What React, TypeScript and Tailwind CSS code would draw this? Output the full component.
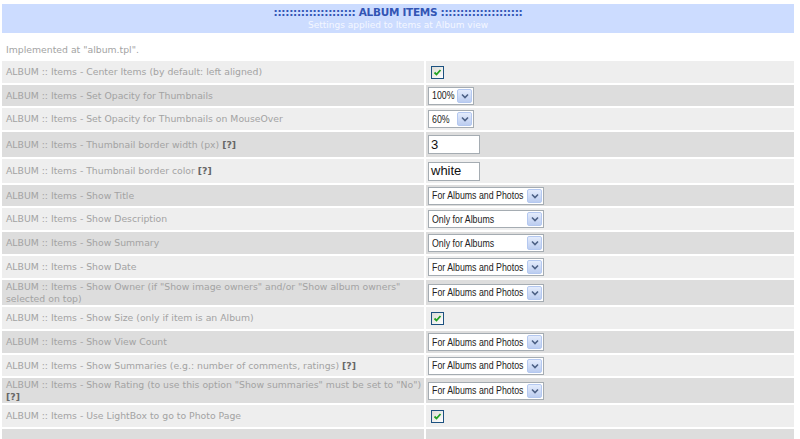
import React from "react";

type Ctrl =
  | { kind: "check" }
  | { kind: "select"; value: string; w: number }
  | { kind: "text"; value: string };

type Row = { label: React.ReactNode; ctrl: Ctrl; h: number };

const Q = () => <b className="text-[#666666]">[?]</b>;

const BIG = 116;

const rows: Row[] = [
  { label: "ALBUM :: Items - Center Items (by default: left aligned)", ctrl: { kind: "check" }, h: 22 },
  { label: "ALBUM :: Items - Set Opacity for Thumbnails", ctrl: { kind: "select", value: "100%", w: 46 }, h: 21 },
  { label: "ALBUM :: Items - Set Opacity for Thumbnails on MouseOver", ctrl: { kind: "select", value: "60%", w: 46 }, h: 22 },
  { label: <>ALBUM :: Items - Thumbnail border width (px) <Q /></>, ctrl: { kind: "text", value: "3" }, h: 25 },
  { label: <>ALBUM :: Items - Thumbnail border color <Q /></>, ctrl: { kind: "text", value: "white" }, h: 24 },
  { label: "ALBUM :: Items - Show Title", ctrl: { kind: "select", value: "For Albums and Photos", w: BIG }, h: 21 },
  { label: "ALBUM :: Items - Show Description", ctrl: { kind: "select", value: "Only for Albums", w: BIG }, h: 22 },
  { label: "ALBUM :: Items - Show Summary", ctrl: { kind: "select", value: "Only for Albums", w: BIG }, h: 22 },
  { label: "ALBUM :: Items - Show Date", ctrl: { kind: "select", value: "For Albums and Photos", w: BIG }, h: 22 },
  { label: 'ALBUM :: Items - Show Owner (if "Show image owners" and/or "Show album owners" selected on top)', ctrl: { kind: "select", value: "For Albums and Photos", w: BIG }, h: 25 },
  { label: "ALBUM :: Items - Show Size (only if item is an Album)", ctrl: { kind: "check" }, h: 22 },
  { label: "ALBUM :: Items - Show View Count", ctrl: { kind: "select", value: "For Albums and Photos", w: BIG }, h: 22 },
  { label: <>ALBUM :: Items - Show Summaries (e.g.: number of comments, ratings) <Q /></>, ctrl: { kind: "select", value: "For Albums and Photos", w: BIG }, h: 21 },
  { label: <>ALBUM :: Items - Show Rating (to use this option "Show summaries" must be set to "No") <Q /></>, ctrl: { kind: "select", value: "For Albums and Photos", w: BIG }, h: 25 },
  { label: "ALBUM :: Items - Use LightBox to go to Photo Page", ctrl: { kind: "check" }, h: 22 },
  { label: "", ctrl: { kind: "check" }, h: 22 },
];

function Check() {
  return (
    <div className="w-[13px] h-[13px] border border-[#1c5180] bg-gradient-to-br from-[#dcdcd6] to-[#ffffff] flex items-center justify-center">
      <svg width="9" height="9" viewBox="0 0 9 9">
        <path d="M1.5 4.5 L3.5 6.5 L7.5 2" fill="none" stroke="#21a121" strokeWidth="1.8" />
      </svg>
    </div>
  );
}

function Select({ value, w }: { value: string; w: number }) {
  return (
    <div
      className="h-[18px] shrink-0 border border-[#a5acb2] bg-white flex items-center pl-[3px] pr-[1px] font-['Liberation_Sans',sans-serif] text-[11px] text-[#222222] whitespace-nowrap"
      style={{ width: w }}
    >
      <div className="flex-1 min-w-0 overflow-hidden">
        <span className="inline-block origin-left scale-x-[0.8] leading-none">{value}</span>
      </div>
      <div className="w-[15px] h-[14px] rounded-[2px] border border-[#b4c8f0] bg-gradient-to-b from-[#e4ecfc] to-[#bccdf0] flex items-center justify-center shrink-0">
        <svg width="8" height="6" viewBox="0 0 8 6">
          <path d="M1 1.5 L4 4.5 L7 1.5" fill="none" stroke="#4d6185" strokeWidth="1.6" />
        </svg>
      </div>
    </div>
  );
}

function TextInput({ value }: { value: string }) {
  return (
    <div className="w-[52px] h-[19px] border border-[#a5acb2] bg-white flex items-center pl-[2px] font-['Liberation_Sans',sans-serif] text-[13px] text-[#111111]">
      {value}
    </div>
  );
}

export default function App() {
  return (
    <div className="w-[800px] h-[439px] overflow-hidden bg-white font-['DejaVu_Sans',sans-serif] text-[9.3px] text-[#a3a3a3]">
      <div className="pt-[4px] pl-[2px] pr-[6px]">
        <div className="h-[29px] bg-[#ccdcff] flex flex-col items-center justify-center">
          <div className="text-[10.5px] font-bold text-[#3355b4] leading-[12px] tracking-[-0.3px]">
            ::::::::::::::::::::: ALBUM ITEMS :::::::::::::::::::::
          </div>
          <div className="text-[9px] text-[#f4f7ff] leading-[12px] pt-[1px]">Settings applied to Items at Album view</div>
        </div>
        <div className="h-[28px] flex items-center pl-[4px] pt-[6px]">Implemented at "album.tpl".</div>
        <div className="flex flex-col gap-[2px]">
          {rows.map((r, i) => {
            const bg = i % 2 === 0 ? "bg-[#eeeeee]" : "bg-[#dddddd]";
            return (
              <div key={i} className="flex gap-[2px]" style={{ height: r.h }}>
                <div className={`w-[422px] ${bg} flex items-center pl-[4px] pr-[1px] leading-[12px]`}>
                  <span>{r.label}</span>
                </div>
                <div className={`flex-1 ${bg} flex items-center pl-[2px]`}>
                  {r.label === "" ? null : r.ctrl.kind === "check" ? (
                    <div className="pl-[3px]">
                      <Check />
                    </div>
                  ) : r.ctrl.kind === "select" ? (
                    <Select value={r.ctrl.value} w={r.ctrl.w} />
                  ) : (
                    <TextInput value={r.ctrl.value} />
                  )}
                </div>
              </div>
            );
          })}
        </div>
      </div>
    </div>
  );
}
